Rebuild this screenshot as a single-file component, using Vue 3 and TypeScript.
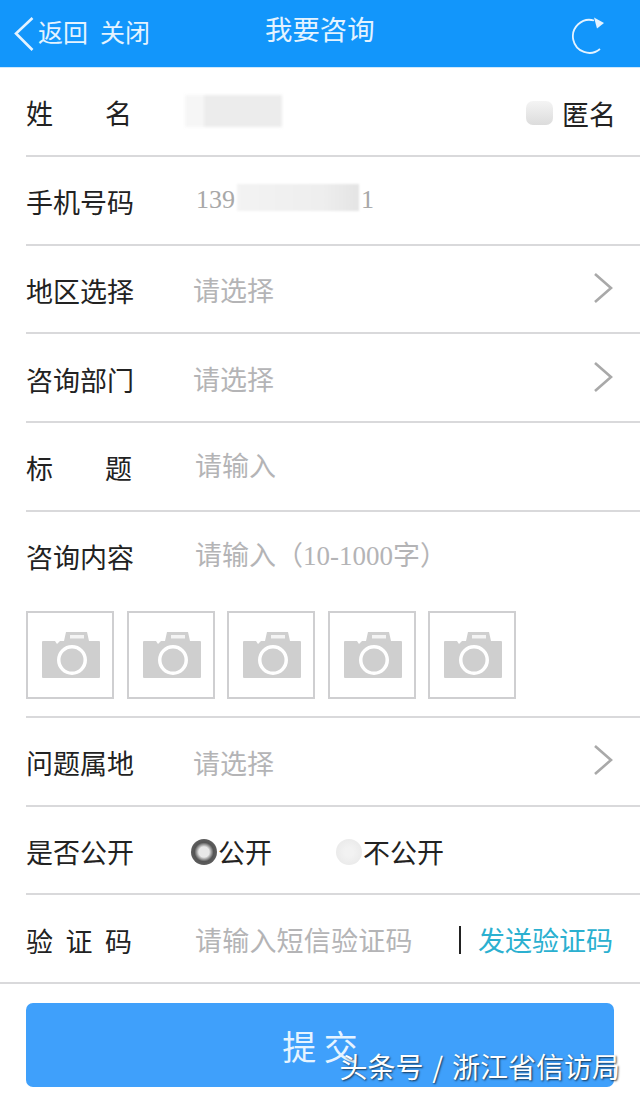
<template>
  <div class="page">
    <header class="topbar">
      <div class="nav-left">
        <svg class="back" width="22" height="36" viewBox="0 0 22 36" fill="none" stroke="#e4f3ff" stroke-width="2.6">
          <path d="M19.5 2 L3 17.5 L19.5 34" />
        </svg>
        <span>返回</span>
        <span class="close">关闭</span>
      </div>
      <div class="title">我要咨询</div>
      <svg class="refresh" width="38" height="40" viewBox="0 0 38 40" fill="none" stroke="#e4f3ff" stroke-width="1.8">
        <path d="M32 34 A16.5 16.5 0 1 1 26 5.5" />
        <path d="M26 2.5 L36 8 L29 13.5 Z" fill="#e4f3ff" stroke="none" />
      </svg>
    </header>

    <div class="row">
      <div class="label spaced"><span>姓</span><span>名</span></div>
      <div class="blur-name"></div>
      <div class="anon">
        <i class="check"></i>
        <span>匿名</span>
      </div>
    </div>

    <div class="row">
      <div class="label">手机号码</div>
      <div class="phone">
        <span>139</span>
        <i class="blur-phone"></i>
        <span>1</span>
      </div>
    </div>

    <div v-for="item in selectsTop" :key="item" class="row">
      <div class="label">{{ item }}</div>
      <div class="hint">请选择</div>
      <svg class="chevron" width="20" height="32" viewBox="0 0 20 32" fill="none" stroke="#a9a9a9" stroke-width="2.6">
        <path d="M2 2 L18 16 L2 30" />
      </svg>
    </div>

    <div class="row">
      <div class="label spaced"><span>标</span><span>题</span></div>
      <div class="hint input">请输入</div>
    </div>

    <div class="content-block">
      <div class="row bare">
        <div class="label">咨询内容</div>
        <div class="hint input">请输入（<span class="num">10-1000</span>字）</div>
      </div>
      <div class="photos">
        <div v-for="n in 5" :key="n" class="photo">
          <svg width="58" height="47" viewBox="0 0 58 47">
            <path
              fill="#cfcfcf"
              fill-rule="evenodd"
              d="M1 10 H13 L15 13 L18 10 H22 L24 1 H45 L47 10 H57 Q58 10 58 11 V46 Q58 47 57 47 H1 Q0 47 0 46 V11 Q0 10 1 10 Z M30 14 A15 15 0 1 0 30.01 44 A15 15 0 1 0 30 14 Z M30 17.5 A11.5 11.5 0 1 1 29.99 40.5 A11.5 11.5 0 1 1 30 17.5 Z"
            />
            <rect x="28" y="4" width="14" height="3.5" fill="#f4f4f4" />
          </svg>
        </div>
      </div>
    </div>

    <div class="row">
      <div class="label">问题属地</div>
      <div class="hint">请选择</div>
      <svg class="chevron" width="20" height="32" viewBox="0 0 20 32" fill="none" stroke="#a9a9a9" stroke-width="2.6">
        <path d="M2 2 L18 16 L2 30" />
      </svg>
    </div>

    <div class="row">
      <div class="label">是否公开</div>
      <div class="radios">
        <div class="radio-item first">
          <i class="radio on"></i>
          <span>公开</span>
        </div>
        <div class="radio-item">
          <i class="radio"></i>
          <span>不公开</span>
        </div>
      </div>
    </div>

    <div class="row full">
      <div class="label spaced"><span>验</span><span>证</span><span>码</span></div>
      <div class="hint input code">请输入短信验证码</div>
      <div class="send">
        <i class="sep"></i>
        <span>发送验证码</span>
      </div>
    </div>

    <div class="actions">
      <button class="submit" type="button">提 交</button>
    </div>

    <div class="watermark">头条号 / 浙江省信访局</div>
  </div>
</template>

<script setup lang="ts">
const selectsTop: string[] = ['地区选择', '咨询部门']
</script>

<style>
html,
body {
  margin: 0;
  background: #fff;
}
</style>

<style scoped>
.page {
  position: relative;
  width: 640px;
  height: 1094px;
  overflow: hidden;
  background: #fff;
  color: #222;
  font-family: "Noto Sans CJK SC", "Liberation Sans", sans-serif;
  font-size: 27px;
}

.topbar {
  position: relative;
  display: flex;
  align-items: center;
  height: 67px;
  padding: 0 14px 0 13px;
  background: #1296fb;
  color: #e4f3ff;
  border-bottom: 1px solid #cfe8fb;
}

.nav-left {
  display: flex;
  align-items: center;
  font-size: 25px;
}

.nav-left span {
  margin-bottom: 6px;
}

.back {
  margin-right: 3px;
}

.nav-left .close {
  margin-left: 12px;
}

.title {
  position: absolute;
  left: 265px;
  top: 8px;
  line-height: 40px;
  font-size: 27.4px;
}

.refresh {
  margin-left: auto;
  margin-right: 20px;
  margin-top: 2px;
}

.row {
  display: flex;
  align-items: center;
  height: 88.75px;
  box-sizing: border-box;
  margin-left: 26px;
  padding-top: 4px;
  border-bottom: 2px solid #d9d9db;
}

.row.bare {
  border-bottom: 0;
  padding-top: 2px;
}

.row.full {
  margin-left: 0;
  padding-left: 26px;
}

.label {
  flex: none;
  width: 108px;
  margin-right: 59px;
  line-height: 36px;
  white-space: nowrap;
}

.label.spaced {
  display: flex;
  justify-content: space-between;
  width: 106px;
  margin-right: 61px;
}

.blur-name {
  width: 97px;
  height: 32px;
  margin-left: -8px;
  margin-top: -4px;
  background: linear-gradient(90deg, #f6f6f6 0 20%, #ececec 20% 100%);
  filter: blur(1.5px);
}

.anon {
  display: flex;
  align-items: center;
  margin-left: auto;
  margin-right: 24px;
}

.check {
  width: 27px;
  height: 24px;
  margin-right: 9px;
  border-radius: 7px;
  background: linear-gradient(180deg, #f4f4f4, #dcdcdc);
}

.phone {
  display: flex;
  align-items: center;
  margin-left: 3px;
  margin-top: -5px;
  font-family: "Liberation Serif", serif;
  font-size: 26px;
  color: #a8a8a8;
}

.blur-phone {
  width: 122px;
  height: 27px;
  margin: -5px 2px 0 2px;
  background: linear-gradient(90deg, #f3f3f3, #eeeeee 70%, #e4e4e4);
  filter: blur(1px);
}

.hint {
  margin-top: -2px;
  color: #b4b4b6;
}

.hint.input {
  margin-left: 2px;
  margin-top: -8px;
}

.hint.input.code {
  margin-top: -2px;
  letter-spacing: 0.2px;
}

.num {
  font-family: "Liberation Serif", serif;
}

.chevron {
  margin-left: auto;
  margin-right: 27px;
  margin-top: -6px;
}

.content-block {
  height: 206px;
  margin-left: 26px;
  border-bottom: 2px solid #d9d9db;
  box-sizing: border-box;
}

.content-block .row {
  margin-left: 0;
}

.content-block .row.bare {
  margin-bottom: 10px;
}

.photos {
  display: flex;
  gap: 12.6px;
}

.photo {
  display: flex;
  align-items: center;
  justify-content: center;
  width: 88px;
  height: 88px;
  box-sizing: border-box;
  border: 2px solid #cfcfd1;
  padding-left: 2px;
}

.radios {
  display: flex;
  margin-left: -2px;
}

.radio-item {
  display: flex;
  align-items: center;
}

.radio-item.first {
  width: 145px;
}

.radio {
  width: 26px;
  height: 26px;
  margin-right: 1px;
  border-radius: 50%;
  background: radial-gradient(circle, #f2f2f2 0 24%, #e6e6e6 100%);
}

.radio.on {
  background: radial-gradient(circle, #e8e8e8 0 28%, #555 52%, #6a6a6a 100%);
}

.send {
  display: flex;
  align-items: center;
  margin-left: auto;
  margin-right: 27px;
  margin-top: -2px;
  color: #2bb0d0;
  font-size: 27px;
}

.sep {
  width: 2px;
  height: 28px;
  margin-right: 17px;
  background: #222;
}

.actions {
  padding: 19px 26px 0;
}

.submit {
  display: block;
  width: 100%;
  height: 84px;
  padding: 0;
  border: 0;
  border-radius: 7px;
  background: #3fa0fb;
  color: #e6f4ff;
  font-family: inherit;
  font-size: 34px;
}

.watermark {
  position: absolute;
  right: 20px;
  bottom: 8px;
  font-size: 28px;
  line-height: 40px;
  color: #fff;
  white-space: nowrap;
  word-spacing: 2.5px;
  text-shadow: 1px 1px 2px rgba(0, 0, 0, 0.7);
}
</style>
